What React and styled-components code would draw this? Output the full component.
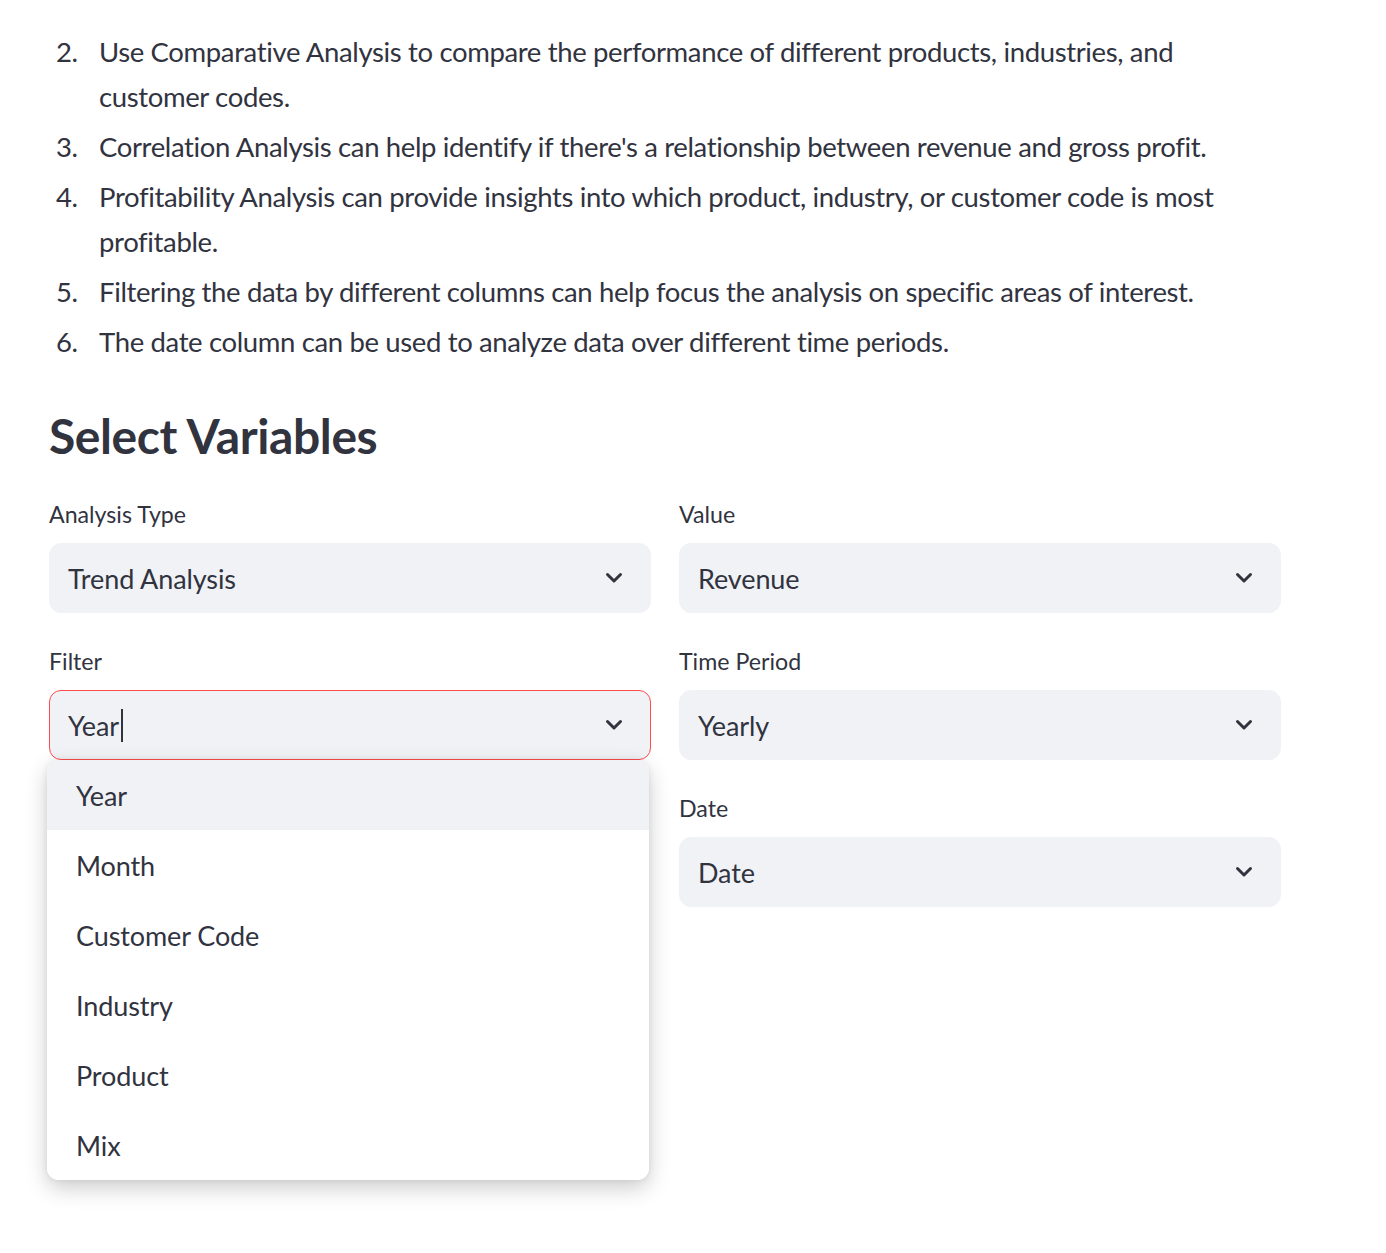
import React from 'react';
import styled, { createGlobalStyle } from 'styled-components';

const GlobalStyle = createGlobalStyle`
  body {
    margin: 0;
    background: #ffffff;
    font-family: Lato, "Noto Sans", sans-serif;
    color: #31333f;
  }
`;

const tips = [
  { n: 2, text: 'Use Comparative Analysis to compare the performance of different products, industries, and customer codes.' },
  { n: 3, text: "Correlation Analysis can help identify if there's a relationship between revenue and gross profit." },
  { n: 4, text: 'Profitability Analysis can provide insights into which product, industry, or customer code is most profitable.' },
  { n: 5, text: 'Filtering the data by different columns can help focus the analysis on specific areas of interest.' },
  { n: 6, text: 'The date column can be used to analyze data over different time periods.' },
];

const filterOptions = ['Year', 'Month', 'Customer Code', 'Industry', 'Product', 'Mix'];

const Chevron = () => (
  <svg width="18" height="12" viewBox="0 0 18 12" fill="none">
    <path d="M2.5 2.5 L9 9 L15.5 2.5" stroke="#31333f" strokeWidth="3" strokeLinecap="round" strokeLinejoin="round" />
  </svg>
);

const Select = ({ value, focused, open, options }) => (
  <BoxWrap>
    <Box focused={focused}>
      <BoxValue>
        {value}
        {focused && <Caret />}
      </BoxValue>
      <Chevron />
    </Box>
    {open && (
      <Menu>
        {options.map((o, i) => (
          <Option key={o} active={i === 0}>{o}</Option>
        ))}
      </Menu>
    )}
  </BoxWrap>
);

const App = () => {
  return (
    <Page>
      <GlobalStyle />
      <List>
        {tips.map((t) => (
          <Item key={t.n}>
            <Num>{t.n}.</Num>
            <ItemText>{t.text}</ItemText>
          </Item>
        ))}
      </List>

      <Heading>Select Variables</Heading>

      <Columns>
        <Column>
          <Field>
            <Label>Analysis Type</Label>
            <Select value="Trend Analysis" />
          </Field>
          <Field>
            <Label>Filter</Label>
            <Select value="Year" focused open options={filterOptions} />
          </Field>
        </Column>
        <Column>
          <Field>
            <Label>Value</Label>
            <Select value="Revenue" />
          </Field>
          <Field>
            <Label>Time Period</Label>
            <Select value="Yearly" />
          </Field>
          <Field>
            <Label>Date</Label>
            <Select value="Date" />
          </Field>
        </Column>
      </Columns>
    </Page>
  );
};

export default App;

const Page = styled.div`
  padding: 29px 0 0 49px;
  width: 1232px;
  min-height: 1253px;
  box-sizing: content-box;
`;

const List = styled.div`
  display: flex;
  flex-direction: column;
  gap: 5px;
  font-size: 27.5px;
  letter-spacing: -0.36px;
  line-height: 45px;
`;

const Item = styled.div`
  display: flex;
`;

const Num = styled.div`
  flex: 0 0 50px;
  padding-left: 7px;
  box-sizing: border-box;
`;

const ItemText = styled.div`
  flex: 1;
`;

const Heading = styled.h2`
  margin: 42px 0 31px;
  font-size: 48px;
  line-height: 60px;
  font-weight: 700;
  letter-spacing: -0.4px;
`;

const Columns = styled.div`
  display: grid;
  grid-template-columns: 1fr 1fr;
  gap: 28px;
`;

const Column = styled.div`
  display: flex;
  flex-direction: column;
  gap: 31px;
`;

const Field = styled.div`
  display: flex;
  flex-direction: column;
`;

const Label = styled.div`
  font-size: 23.2px;
  line-height: 34px;
  margin-bottom: 12px;
`;

const BoxWrap = styled.div`
  position: relative;
`;

const Box = styled.div`
  height: 70px;
  box-sizing: border-box;
  display: flex;
  align-items: center;
  justify-content: space-between;
  padding: 0 27px 0 18px;
  background: #f0f2f6;
  border-radius: 12px;
  border: 1px solid ${(p) => (p.focused ? '#ff4b4b' : '#f0f2f6')};
  font-size: 27px;
  letter-spacing: -0.1px;
`;

const BoxValue = styled.div`
  display: flex;
  align-items: center;
`;

const Caret = styled.span`
  display: inline-block;
  width: 2px;
  height: 33px;
  margin-left: 2px;
  background: #31333f;
`;

const Menu = styled.div`
  position: absolute;
  top: 100%;
  left: -2px;
  width: 602px;
  background: #ffffff;
  border-radius: 12px;
  overflow: hidden;
  box-shadow: 0 8px 22px rgba(0, 0, 0, 0.2), 0 0 6px rgba(0, 0, 0, 0.07);
  z-index: 10;
`;

const Option = styled.div`
  height: 70px;
  display: flex;
  align-items: center;
  padding-left: 29px;
  font-size: 27px;
  letter-spacing: -0.1px;
  background: ${(p) => (p.active ? '#f0f2f6' : '#ffffff')};
`;
